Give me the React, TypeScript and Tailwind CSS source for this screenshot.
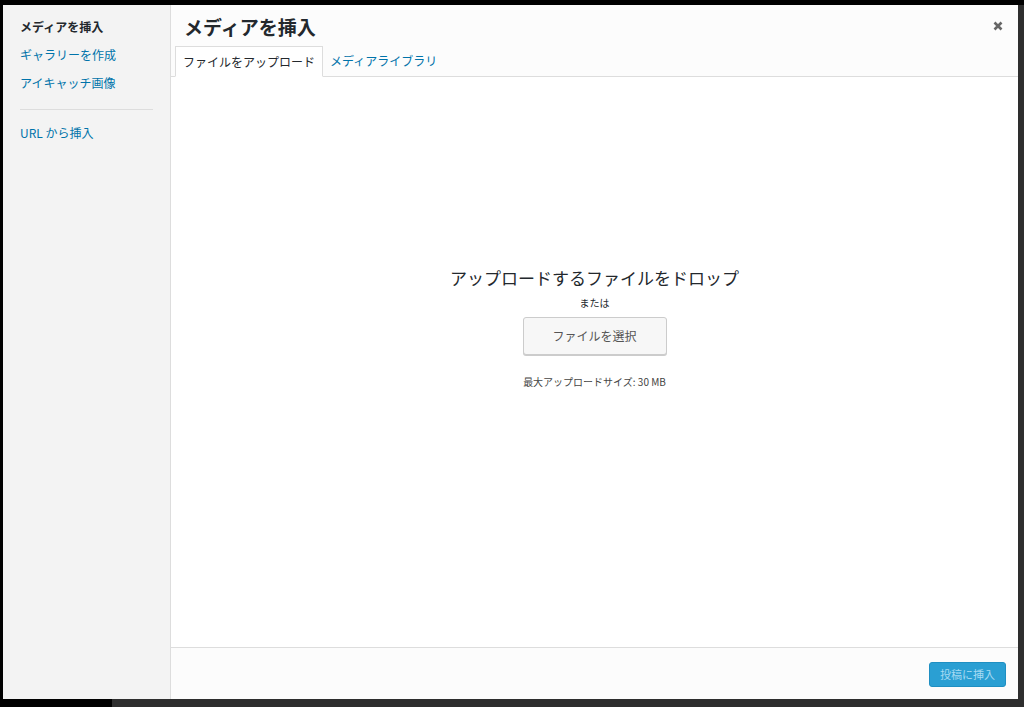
import React from "react";

const font = { fontFamily: '"Noto Sans CJK JP", "Noto Sans", sans-serif' };

export default function App() {
  return (
    <div className="relative w-[1024px] h-[707px] bg-[#2e2e2e] overflow-hidden" style={font}>
      <div className="absolute left-0 top-0 w-full h-[5px] bg-black" />
      <div className="absolute left-0 top-0 w-[3px] h-full bg-black" />
      <div className="absolute left-0 bottom-0 w-[112px] h-[8px] bg-black" />
      <div className="absolute left-[3px] top-[5px] w-[1015px] h-[694px] flex bg-white">
        {/* Sidebar */}
        <div className="w-[168px] h-full bg-[#f3f3f3] border-r border-[#dddddd] flex flex-col pt-[12px] px-[17px]">
          <div className="text-[12px] leading-[20px] font-bold text-[#23282d]">メディアを挿入</div>
          <div className="text-[12px] leading-[20px] text-[#0073aa] mt-[8px]">ギャラリーを作成</div>
          <div className="text-[12px] leading-[20px] text-[#0073aa] mt-[8px]">アイキャッチ画像</div>
          <div className="h-px bg-[#dddddd] mt-[16px] mb-[13px]" />
          <div className="text-[12px] leading-[20px] text-[#0073aa]">URL から挿入</div>
        </div>
        {/* Main */}
        <div className="flex-1 flex flex-col min-w-0">
          <div className="h-[41px] bg-[#fcfcfc] flex items-center justify-between pl-[13px] pr-[15px]">
            <div className="text-[19px] font-bold text-[#23282d] leading-none mt-[1px]">メディアを挿入</div>
            <svg width="10" height="10" viewBox="0 0 10 10" className="mt-[1px]">
              <path d="M1.5 1.5 L8.5 8.5 M8.5 1.5 L1.5 8.5" stroke="#666666" strokeWidth="2.6" strokeLinecap="butt" />
            </svg>
          </div>
          <div className="h-[31px] bg-[#fcfcfc] border-b border-[#dddddd] flex items-end pl-[4px]">
            <div className="h-[31px] -mb-px px-[7px] bg-white border border-[#dddddd] border-b-white flex items-center text-[12px] text-[#23282d]">
              ファイルをアップロード
            </div>
            <div className="h-[31px] px-[7px] flex items-center text-[12px] text-[#0073aa]">メディアライブラリ</div>
          </div>
          <div className="flex-1 bg-white flex flex-col items-center pt-[189px]">
            <div className="text-[17px] text-[#23282d] leading-[24px]">アップロードするファイルをドロップ</div>
            <div className="text-[10px] text-[#23282d] mt-[6px] leading-[14px]">または</div>
            <button className="mt-[7px] w-[144px] h-[38px] bg-[#f7f7f7] border border-[#cccccc] rounded-[3px] shadow-[0_1px_0_#cccccc] text-[12px] text-[#555555]">
              ファイルを選択
            </button>
            <div className="text-[10px] text-[#444444] mt-[20px] leading-[14px]">最大アップロードサイズ: 30 MB</div>
          </div>
          <div className="h-[52px] bg-[#fcfcfc] border-t border-[#dddddd] flex items-center justify-end pr-[12px]">
            <button className="w-[77px] h-[25px] rounded-[3px] bg-[#2a9fd3] border border-[#1f8fc2] text-[11px] text-[#a6daf2] mt-[1px]">
              投稿に挿入
            </button>
          </div>
        </div>
      </div>
    </div>
  );
}
